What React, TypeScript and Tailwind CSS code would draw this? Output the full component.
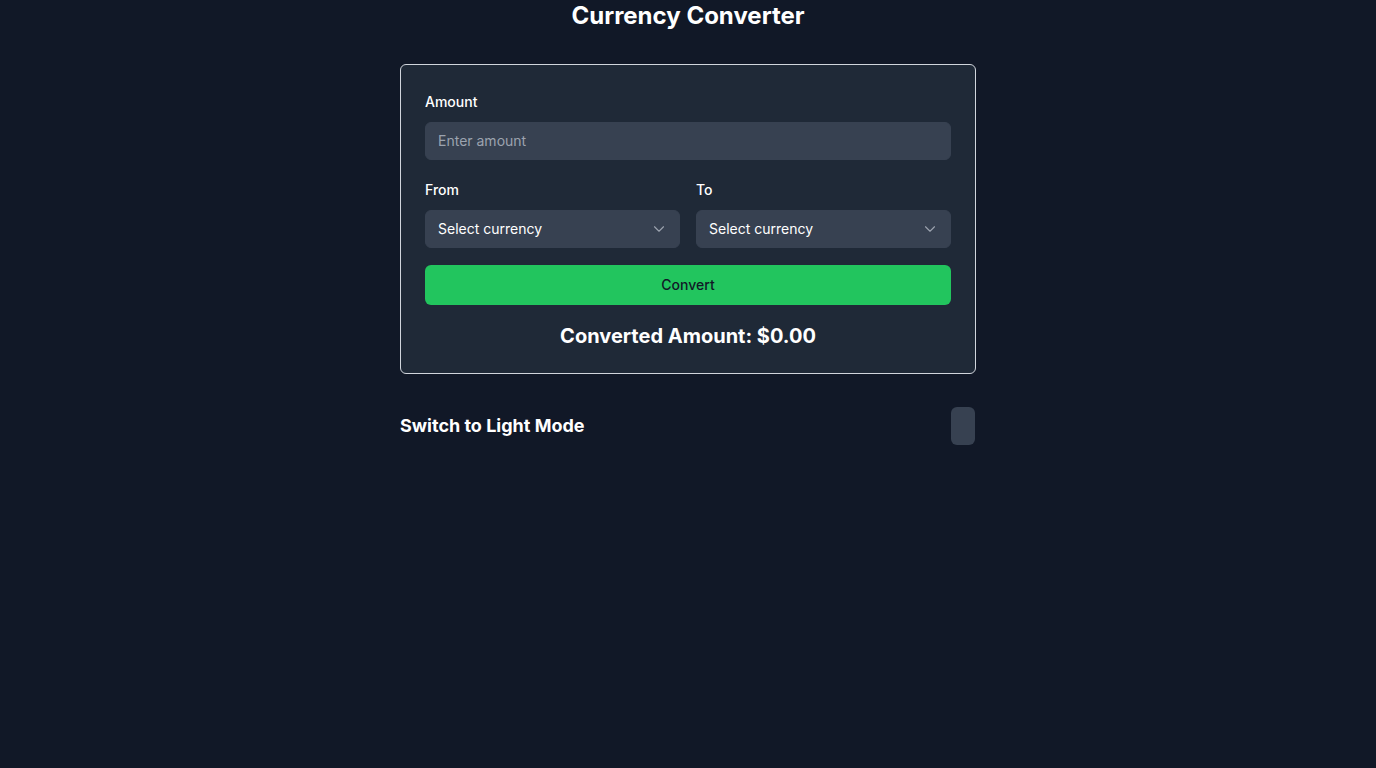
import { useState } from "react";
import { ChevronDown } from "lucide-react";

function CurrencySelect({ label }: { label: string }) {
    return <div className="flex-1">
        <label className="block text-sm leading-6 font-medium mb-2">{label}</label>
        <div className="relative">
            <select className="w-full appearance-none bg-[#374151] rounded-md border border-[#374151] px-3 py-2 text-sm leading-5 text-white outline-none">
                <option>Select currency</option>
                <option>USD</option>
                <option>EUR</option>
                <option>GBP</option>
            </select>
            <ChevronDown size={18} strokeWidth={1.5} className="absolute right-[12px] top-1/2 -translate-y-1/2 text-[#9ca3af] pointer-events-none"/>
        </div>
    </div>
}

export default function App() {
    const [amount, setAmount] = useState("")

    return <div className="min-h-screen bg-[#111827] text-white" style={{ fontFamily: "Inter, 'Noto Sans', sans-serif" }}>
        <div className="max-w-xl mx-auto">
            <h1 className="text-2xl font-bold text-center mb-8">Currency Converter</h1>
            <div className="bg-[#1f2937] border border-gray-300 rounded-md px-6 pt-[25px] pb-[23px]">
                <label className="block text-sm leading-6 font-medium mb-2">Amount</label>
                <input
                    type="text"
                    placeholder="Enter amount"
                    value={amount}
                    onChange={(e) => setAmount(e.target.value)}
                    className="w-full bg-[#374151] border border-[#374151] rounded-md px-3 py-2 text-sm leading-5 text-white placeholder-[#9ca3af] outline-none"
                />
                <div className="flex gap-4 mt-[18px]">
                    <CurrencySelect label="From"/>
                    <CurrencySelect label="To"/>
                </div>
                <button className="w-full mt-[17px] bg-[#22c55e] rounded-md py-2.5 text-sm leading-5 font-medium text-[#111827]">
                    Convert
                </button>
                <p className="mt-[17px] text-xl font-bold text-center">Converted Amount: $0.00</p>
            </div>
            <div className="flex items-center justify-between mt-[33px]">
                <span className="text-lg font-bold">Switch to Light Mode</span>
                <button className="w-6 h-[38px] mr-px bg-[#374151] rounded-md"></button>
            </div>
        </div>
    </div>
}
